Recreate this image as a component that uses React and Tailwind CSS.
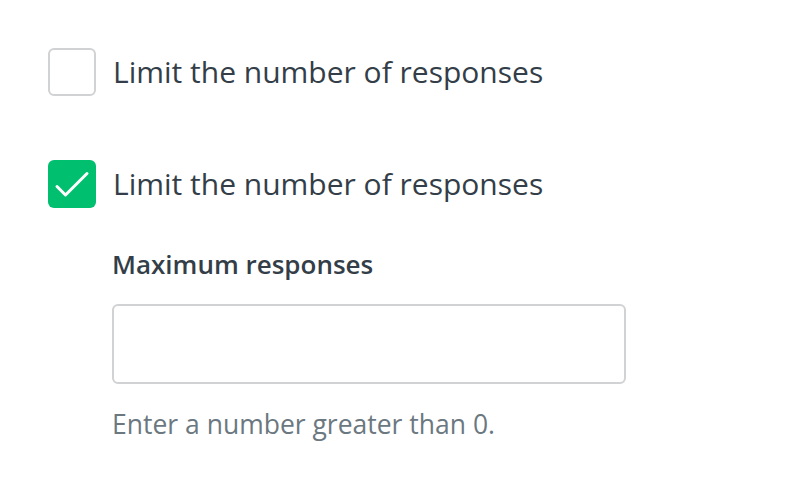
export default function App() {
    return (
        <div className="w-[788px] h-[490px] bg-white pl-12 pt-12 text-[#333e48]" style={{ fontFamily: '"Open Sans", sans-serif' }}>
            <label className="flex items-center h-12">
                <span className="w-12 h-12 rounded-md border-2 border-[#d0d2d3] bg-white shrink-0" />
                <span className="ml-[17px] text-[30px] leading-9">Limit the number of responses</span>
            </label>

            <label className="flex items-center h-12 mt-16">
                <span className="w-12 h-12 rounded-md bg-[#00bf6f] shrink-0">
                    <svg width="48" height="48" viewBox="0 0 48 48" fill="none" stroke="white" strokeWidth="3" strokeLinecap="round" strokeLinejoin="round">
                        <path d="M9 26.5l8.5 8.5L39 13.5" />
                    </svg>
                </span>
                <span className="ml-[17px] text-[30px] leading-9">Limit the number of responses</span>
            </label>

            <div className="ml-16 mt-[40px]">
                <div className="text-[26px] font-semibold leading-8">Maximum responses</div>
                <input type="text" className="mt-[24px] block w-[514px] h-[80px] rounded-md border-2 border-[#d0d2d3] outline-none px-4 text-[24px]" />
                <div className="mt-[24px] text-[26.5px] text-[#6b787f] leading-8">Enter a number greater than 0.</div>
            </div>
        </div>
    );
}
